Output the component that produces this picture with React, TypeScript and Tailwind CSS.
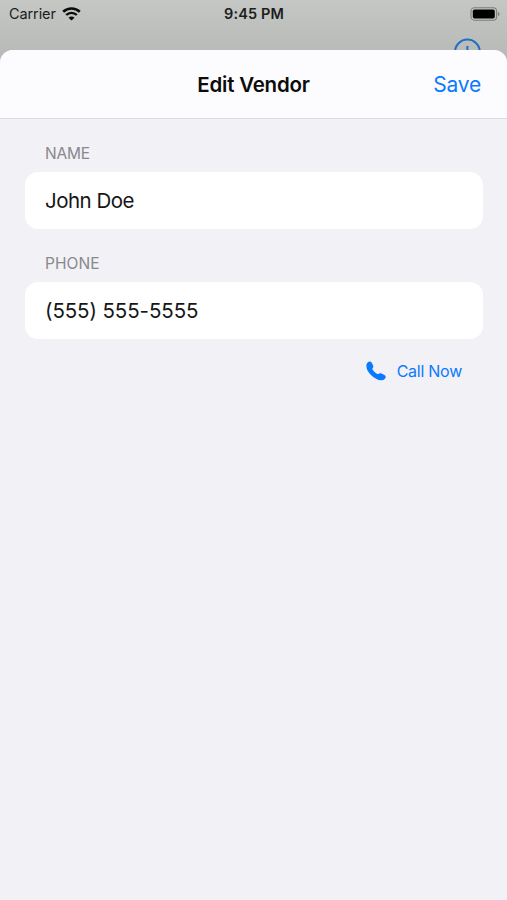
import type { ReactNode } from 'react';

interface FieldProps {
  label: string;
  value: string;
  valueClass: string;
  labelClass: string;
}

function WifiIcon() {
  return (
    <svg className="ml-[6px] h-[14px] w-[19px]" viewBox="0 0 19 14" fill="none" stroke="#0b0b0b">
      <path d="M1.2 4.8C5.8 .3 13.2 .3 17.8 4.8" strokeWidth="2.6" />
      <path d="M4.2 8C7.1 5.1 11.9 5.1 14.8 8" strokeWidth="2.4" />
      <path d="M9.5 13.6 6.5 10.7C8.1 9.1 10.9 9.1 12.5 10.7Z" fill="#0b0b0b" stroke="none" />
    </svg>
  );
}

function BatteryIcon() {
  return (
    <svg className="h-[14px] w-[30px]" viewBox="0 0 30 14" fill="none">
      <rect x="1" y="0.8" width="25.6" height="12.4" rx="3.4" stroke="#7d7f7d" strokeWidth="1.1" />
      <rect x="2.8" y="2.4" width="22" height="9.2" rx="1.8" fill="#000" />
      <path d="M27.9 4.8C30 5.7 30 8.4 27.9 9.3Z" fill="#7d7f7d" />
    </svg>
  );
}

function PhoneIcon() {
  return (
    <svg className="h-[20px] w-[20px]" viewBox="0 0 20 20" fill="#0a7aff">
      <path d="M.8 2.8C1.6 1.4 2.8 .5 4 .6C4.9.7 5.5 1.2 5.9 2L7.1 4.4C7.5 5.2 7.4 6 6.9 6.7L6.5 7.4C6.3 7.9 6.4 8.3 6.8 8.9C7.8 10.3 9.3 11.8 10.9 12.8C11.4 13.1 11.9 13.2 12.4 12.9L13.2 12.5C14 12.1 14.7 12.1 15.6 12.6L18.4 14.1C19.4 14.6 19.9 15.3 19.7 16.2C19.4 17.6 17.8 19 16 19.3C12.6 19.8 8.5 17.4 5.2 14.3C2 11.2-.8 6.3.8 2.8Z" />
    </svg>
  );
}

function Field({ label, value, labelClass, valueClass }: FieldProps) {
  return (
    <section>
      <h2 className={`flex h-[20px] items-center pt-[2px] pl-5 text-[15.5px] text-[#88888d] ${labelClass}`}>{label}</h2>
      <div className="mt-[9px] flex h-[57px] items-center rounded-[13px] bg-white pt-[2px] pl-5">
        <span className={`text-[20.5px] text-[#161616] ${valueClass}`}>{value}</span>
      </div>
    </section>
  );
}

function StatusBar() {
  return (
    <div className="relative h-[50px] bg-linear-to-b from-[#c5c7c4] to-[#b9bbb8]">
      <div className="grid h-[28px] grid-cols-3 items-center pr-[7px] pl-[9px]">
        <div className="flex items-center text-[14.5px] text-[#1c1d1c]">
          <span className="tracking-[-0.1px]">Carrier</span>
          <WifiIcon />
        </div>
        <span className="pr-px text-center text-[14.5px] font-semibold tracking-[0.1px] whitespace-nowrap text-[#1c1d1c]">
          9:45 PM
        </span>
        <div className="flex justify-end">
          <BatteryIcon />
        </div>
      </div>
      {/* add button of the screen underneath, mostly covered by the sheet */}
      <svg className="absolute top-[38px] left-[453px] h-[28px] w-[28px]" viewBox="0 0 28 28" fill="none" stroke="#1f6fc4">
        <circle cx="14.4" cy="14" r="12.4" strokeWidth="2" />
        <path d="M14.4 8V20M8.4 14H20.4" strokeWidth="2" />
      </svg>
    </div>
  );
}

function Sheet({ children }: { children: ReactNode }) {
  return (
    <div className="relative flex-1 overflow-hidden rounded-t-[13px] bg-[#f1f1f6]">
      <header className="grid h-[69px] grid-cols-3 items-center border-b border-[#dcdce0] bg-[#fcfcfe] pt-px pr-[26px] pl-[26px]">
        <span />
        <h1 className="pt-px text-center text-[20.5px] font-semibold tracking-[-0.2px] whitespace-nowrap text-[#0c0c0c]">
          Edit Vendor
        </h1>
        <button className="text-right text-[21px] tracking-[-0.2px] text-[#0a7aff]">Save</button>
      </header>
      {children}
    </div>
  );
}

export default function App() {
  return (
    <div className="flex h-[900px] w-[507px] flex-col bg-[#b9bbb8] font-['Inter',sans-serif]">
      <StatusBar />
      <Sheet>
        <main className="flex flex-col gap-[24px] pt-[24px] pr-[24px] pl-[25px]">
          <Field label="NAME" value="John Doe" labelClass="tracking-[-0.2px]" valueClass="tracking-[-0.5px]" />
          <Field label="PHONE" value="(555) 555-5555" labelClass="tracking-[0.05px]" valueClass="tracking-[-0.1px]" />
        </main>
        <div className="mt-[21px] flex justify-end pr-[45px]">
          <button className="flex items-center text-[#0a7aff]">
            <PhoneIcon />
            <span className="ml-[11px] text-[16px] leading-[22px] tracking-[-0.25px]">Call Now</span>
          </button>
        </div>
      </Sheet>
    </div>
  );
}
